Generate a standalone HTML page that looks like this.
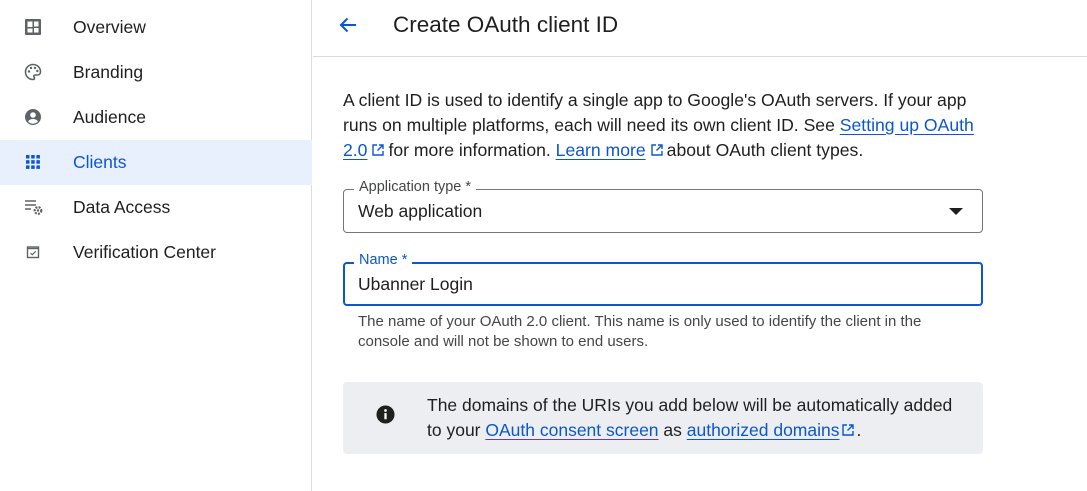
<!DOCTYPE html>
<html><head><style>
*{margin:0;padding:0;box-sizing:border-box}
body{width:1087px;height:491px;overflow:hidden;background:#fff;font-family:"Liberation Sans",sans-serif;color:#1f1f1f;position:relative}
.side{position:absolute;left:0;top:0;width:312px;height:491px;border-right:1px solid #dadce0}
.item{position:absolute;left:0;width:312px;height:45px;font-size:17.5px;color:#1f1f1f}
.item span{position:absolute;left:73px;top:12px;white-space:nowrap}
.item svg{position:absolute;left:23px;top:12px}
.active{background:#e8f0fe;color:#0b57d0}
.hdr{position:absolute;left:313px;top:0;right:0;height:57px;border-bottom:1px solid #dadce0}
.a{color:#0b57d0;text-decoration:underline;text-underline-offset:3px}
.t{position:absolute;white-space:nowrap}
.box{position:absolute;left:343px;width:640px;height:44px;border:1px solid #747775;border-radius:4px}
.lbl{position:absolute;top:-11px;left:10px;background:#fff;padding:0 5px;font-size:14.5px;color:#444746}
.ext{display:inline-block;width:14px;height:14px;margin:0 3px 0 4px;vertical-align:-1px}
</style></head><body>
<div class="side">
 <div class="item" style="top:5px"><svg width="20" height="20" viewBox="0 0 20 20"><rect x="2" y="2" width="16" height="16" fill="#5f6368" rx="1"/><rect x="4.5" y="4.5" width="5" height="11" fill="#fff"/><rect x="11" y="4.5" width="4.5" height="5" fill="#fff"/><rect x="11" y="11" width="4.5" height="4.5" fill="#fff"/><rect x="4.5" y="10" width="5" height="1.5" fill="#5f6368"/></svg><span>Overview</span></div>
 <div class="item" style="top:50px"><svg width="20" height="20" viewBox="0 0 20 20"><path d="M10 2.5a7.5 7.5 0 0 0 0 15c1 0 1.5-.6 1.5-1.3 0-.9-.7-1.1-.7-1.9 0-.8.7-1.3 1.5-1.3h2c2 0 3.2-1.4 3.2-3.3C17.5 5.6 14.2 2.5 10 2.5z" fill="none" stroke="#5f6368" stroke-width="1.6"/><circle cx="6" cy="9.5" r="1.2" fill="#5f6368"/><circle cx="8" cy="6" r="1.2" fill="#5f6368"/><circle cx="12" cy="6" r="1.2" fill="#5f6368"/><circle cx="14.3" cy="9" r="1.2" fill="#5f6368"/></svg><span>Branding</span></div>
 <div class="item" style="top:95px"><svg width="20" height="20" viewBox="0 0 20 20"><circle cx="10" cy="10" r="8" fill="#5f6368"/><circle cx="10" cy="8" r="2.8" fill="#fff"/><path d="M5 14.5c1.5-2 3-2.5 5-2.5s3.5.5 5 2.5c-1.3 1.4-3 2.2-5 2.2s-3.7-.8-5-2.2z" fill="#fff"/></svg><span>Audience</span></div>
 <div class="item active" style="top:140px"><svg width="20" height="20" viewBox="0 0 20 20" fill="#0b57d0"><rect x="3" y="3" width="3.5" height="3.5"/><rect x="8.2" y="3" width="3.5" height="3.5"/><rect x="13.4" y="3" width="3.5" height="3.5"/><rect x="3" y="8.2" width="3.5" height="3.5"/><rect x="8.2" y="8.2" width="3.5" height="3.5"/><rect x="13.4" y="8.2" width="3.5" height="3.5"/><rect x="3" y="13.4" width="3.5" height="3.5"/><rect x="8.2" y="13.4" width="3.5" height="3.5"/><rect x="13.4" y="13.4" width="3.5" height="3.5"/></svg><span>Clients</span></div>
 <div class="item" style="top:185px"><svg width="22" height="20" viewBox="0 0 22 20"><path d="M2 4h11M2 8h11M2 12h6" stroke="#5f6368" stroke-width="1.5"/><circle cx="15" cy="13.5" r="3.3" fill="none" stroke="#5f6368" stroke-width="2.2" stroke-dasharray="2 1.2"/><circle cx="15" cy="13.5" r="1.2" fill="#5f6368"/></svg><span>Data Access</span></div>
 <div class="item" style="top:230px"><svg width="20" height="20" viewBox="0 0 20 20"><rect x="4.5" y="5" width="11" height="10.5" fill="none" stroke="#5f6368" stroke-width="1.4"/><path d="M4.5 6.5h11" stroke="#5f6368" stroke-width="1.4"/><path d="M7.5 11l1.8 1.7 3.4-3.4" fill="none" stroke="#5f6368" stroke-width="1.2"/></svg><span>Verification Center</span></div>
</div>
<div class="hdr">
 <svg style="position:absolute;left:23px;top:13px" width="24" height="24" viewBox="0 0 24 24"><path d="M20 12H5M11.5 5.5L5 12l6.5 6.5" fill="none" stroke="#0b57d0" stroke-width="2"/></svg>
 <div class="t" style="left:80px;top:12px;font-size:22.5px">Create OAuth client ID</div>
</div>
<svg width="0" height="0" style="position:absolute"><defs><symbol id="ex" viewBox="0 0 14 14"><path d="M6 2H2v10h10V8M8 2h4v4M12 2L6.5 7.5" fill="none" stroke="#0b57d0" stroke-width="1.4"/></symbol></defs></svg>
<div class="t" style="left:343px;top:88px;font-size:17.6px;line-height:25px">A client ID is used to identify a single app to Google's OAuth servers. If your app<br>runs on multiple platforms, each will need its own client ID. See <span class="a">Setting up OAuth</span><br><span class="a">2.0</span><svg class="ext"><use href="#ex"/></svg>for more information. <span class="a">Learn more</span><svg class="ext"><use href="#ex"/></svg>about OAuth client types.</div>
<div class="box" style="top:189px"><div class="lbl">Application type *</div><div class="t" style="left:14px;top:11px;font-size:17.5px">Web application</div><svg style="position:absolute;right:19px;top:18px" width="14" height="8"><path d="M0 0h14L7 7z" fill="#1f1f1f"/></svg></div>
<div class="box" style="top:262px;border:2px solid #0b57d0"><div class="lbl" style="color:#0b57d0;left:9px;top:-12px">Name *</div><div class="t" style="left:13px;top:10px;font-size:17.5px">Ubanner Login</div></div>
<div class="t" style="left:358px;top:312px;font-size:15px;line-height:20px;color:#444746">The name of your OAuth 2.0 client. This name is only used to identify the client in the<br>console and will not be shown to end users.</div>
<div style="position:absolute;left:343px;top:382px;width:640px;height:72px;background:#eceef2;border-radius:4px">
 <svg style="position:absolute;left:33px;top:23px" width="19" height="19" viewBox="0 0 20 20"><circle cx="10" cy="10" r="9.5" fill="#1f1f1f"/><rect x="8.8" y="8.5" width="2.4" height="6.5" fill="#fff"/><circle cx="10" cy="5.8" r="1.4" fill="#fff"/></svg>
 <div class="t" style="left:84px;top:11px;font-size:17.5px;line-height:25px">The domains of the URIs you add below will be automatically added<br>to your <span class="a" style="text-decoration-color:#6a3ab2">OAuth consent screen</span> as <span class="a">authorized domains</span><svg class="ext" style="margin:0 1px 0 2px"><use href="#ex"/></svg>.</div>
</div>
</body></html>
